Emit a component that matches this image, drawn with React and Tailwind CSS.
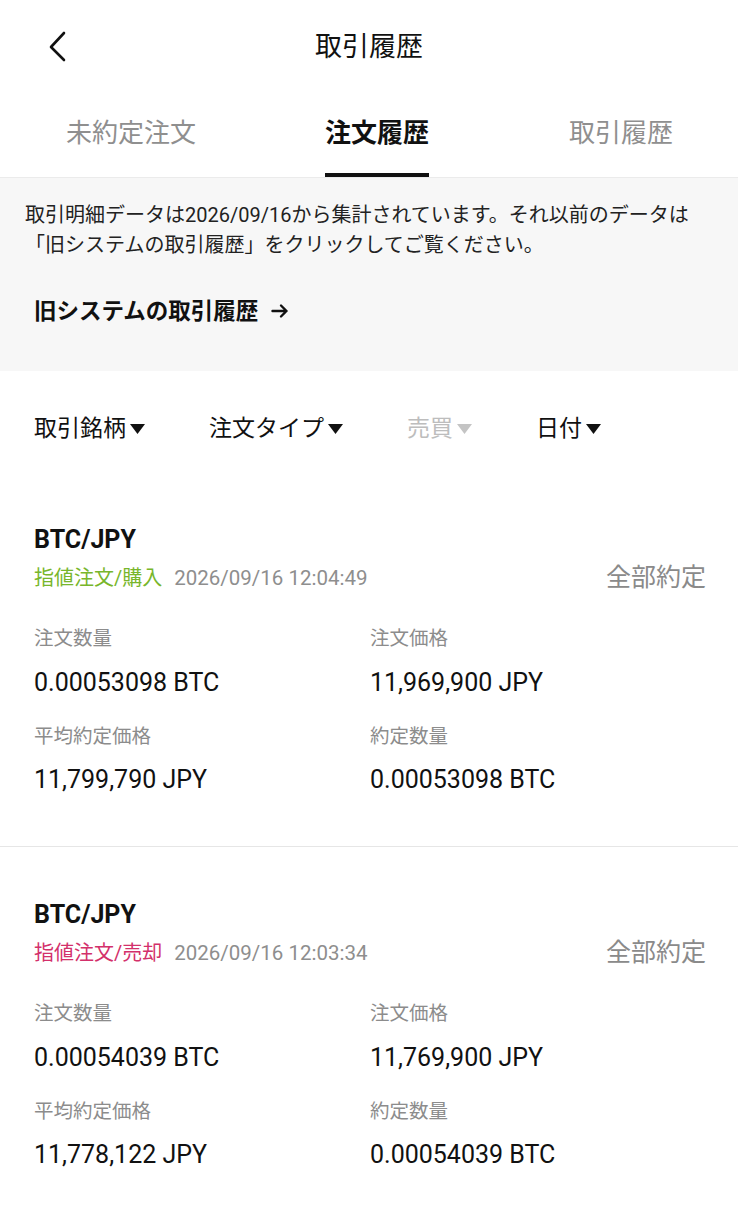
import React from 'react';

const FONT = "font-['Roboto','Noto_Sans_CJK_JP',sans-serif]";

function Caret({ muted }) {
  return (
    <svg width="15" height="12" viewBox="0 0 15 12" className="ml-[4px]">
      <polygon points="0,1 15,1 7.5,11" fill={muted ? '#c4c4c4' : '#111'} />
    </svg>
  );
}

function Order({ side, sideClass, time, qty, price, avg, filled, last }) {
  return (
    <div className={`px-[34px] pt-[52px] pb-[50px] ${last ? '' : 'border-b border-[#e6e6e6]'}`}>
      <div className="text-[25px] leading-[32px] font-bold text-[#111]">BTC/JPY</div>
      <div className="mt-[8px] flex items-center justify-between">
        <div className="flex items-center leading-[28px]">
          <span className={`text-[20px] ${sideClass}`}>{side}</span>
          <span className="ml-[12px] text-[20.5px] text-[#8e8e8e]">{time}</span>
        </div>
        <span className="text-[25px] leading-[28px] text-[#8a8a8a] -mr-[2px]">全部約定</span>
      </div>
      <div className="grid grid-cols-[336px_1fr]">
        <div>
          <div className="mt-[35px] text-[19.5px] leading-[24px] text-[#8c8c8c]">注文数量</div>
          <div className="mt-[16px] text-[25px] leading-[32px] text-[#111]">{qty}</div>
          <div className="mt-[26px] text-[19.5px] leading-[24px] text-[#8c8c8c]">平均約定価格</div>
          <div className="mt-[15px] text-[25px] leading-[32px] text-[#111]">{avg}</div>
        </div>
        <div>
          <div className="mt-[35px] text-[19.5px] leading-[24px] text-[#8c8c8c]">注文価格</div>
          <div className="mt-[16px] text-[25px] leading-[32px] text-[#111]">{price}</div>
          <div className="mt-[26px] text-[19.5px] leading-[24px] text-[#8c8c8c]">約定数量</div>
          <div className="mt-[15px] text-[25px] leading-[32px] text-[#111]">{filled}</div>
        </div>
      </div>
    </div>
  );
}

export default function App() {
  const filters = [
    { label: '取引銘柄' },
    { label: '注文タイプ' },
    { label: '売買', muted: true },
    { label: '日付' },
  ];

  return (
    <div className={`${FONT} w-[738px] min-h-[1207px] bg-white text-[#111]`}>
      {/* header */}
      <div className="h-[94px] grid grid-cols-[1fr_auto_1fr] items-center">
        <div className="pl-[48px] flex items-center">
          <svg width="22" height="34" viewBox="0 0 22 34">
            <polyline points="16,3 3,17 16,30" fill="none" stroke="#111" strokeWidth="2.6" strokeLinecap="round" strokeLinejoin="round" />
          </svg>
        </div>
        <div className="text-[27px] leading-[36px] text-[#111]">取引履歴</div>
        <div />
      </div>

      {/* tabs */}
      <div className="flex pl-[66px] border-b border-[#ebebeb]">
        <div className="flex flex-col">
          <span className="mt-[21px] text-[26px] leading-[36px] text-[#8f8f8f]">未約定注文</span>
          <div className="mt-[22px] h-[4px]" />
        </div>
        <div className="ml-[129px] flex flex-col">
          <span className="mt-[21px] text-[26px] leading-[36px] font-semibold text-[#111]">注文履歴</span>
          <div className="mt-[22px] h-[4px] bg-[#111]" />
        </div>
        <div className="ml-[140px] flex flex-col">
          <span className="mt-[21px] text-[26px] leading-[36px] text-[#8f8f8f]">取引履歴</span>
          <div className="mt-[22px] h-[4px]" />
        </div>
      </div>

      {/* notice */}
      <div className="bg-[#f7f7f7] pt-[22px] pb-[44px]">
        <p className="px-[25px] text-[20px] leading-[30px] text-[#222]">
          取引明細データは2026/09/16から集計されています。それ以前のデータは
          <br />
          「旧システムの取引履歴」をクリックしてご覧ください。
        </p>
        <div className="mt-[35px] px-[34px] flex items-center text-[22.5px] leading-[32px] font-bold text-[#111]">
          旧システムの取引履歴
          <svg width="18" height="16" viewBox="0 0 18 16" className="ml-[13px]">
            <path d="M1.5 8h14M10 2.5l5.5 5.5L10 13.5" fill="none" stroke="#111" strokeWidth="2.4" strokeLinecap="round" strokeLinejoin="round" />
          </svg>
        </div>
      </div>

      {/* filters */}
      <div className="pt-[40px] pb-[25px] px-[34px] flex items-center gap-[64px]">
        {filters.map((f) => (
          <div key={f.label} className={`flex items-center text-[23px] leading-[36px] ${f.muted ? 'text-[#bdbdbd]' : 'text-[#111]'}`}>
            {f.label}
            <Caret muted={f.muted} />
          </div>
        ))}
      </div>

      <Order
        side="指値注文/購入"
        sideClass="text-[#78b62b]"
        time="2026/09/16 12:04:49"
        qty="0.00053098 BTC"
        price="11,969,900 JPY"
        avg="11,799,790 JPY"
        filled="0.00053098 BTC"
      />
      <Order
        side="指値注文/売却"
        sideClass="text-[#d3306b]"
        time="2026/09/16 12:03:34"
        qty="0.00054039 BTC"
        price="11,769,900 JPY"
        avg="11,778,122 JPY"
        filled="0.00054039 BTC"
        last
      />
    </div>
  );
}
